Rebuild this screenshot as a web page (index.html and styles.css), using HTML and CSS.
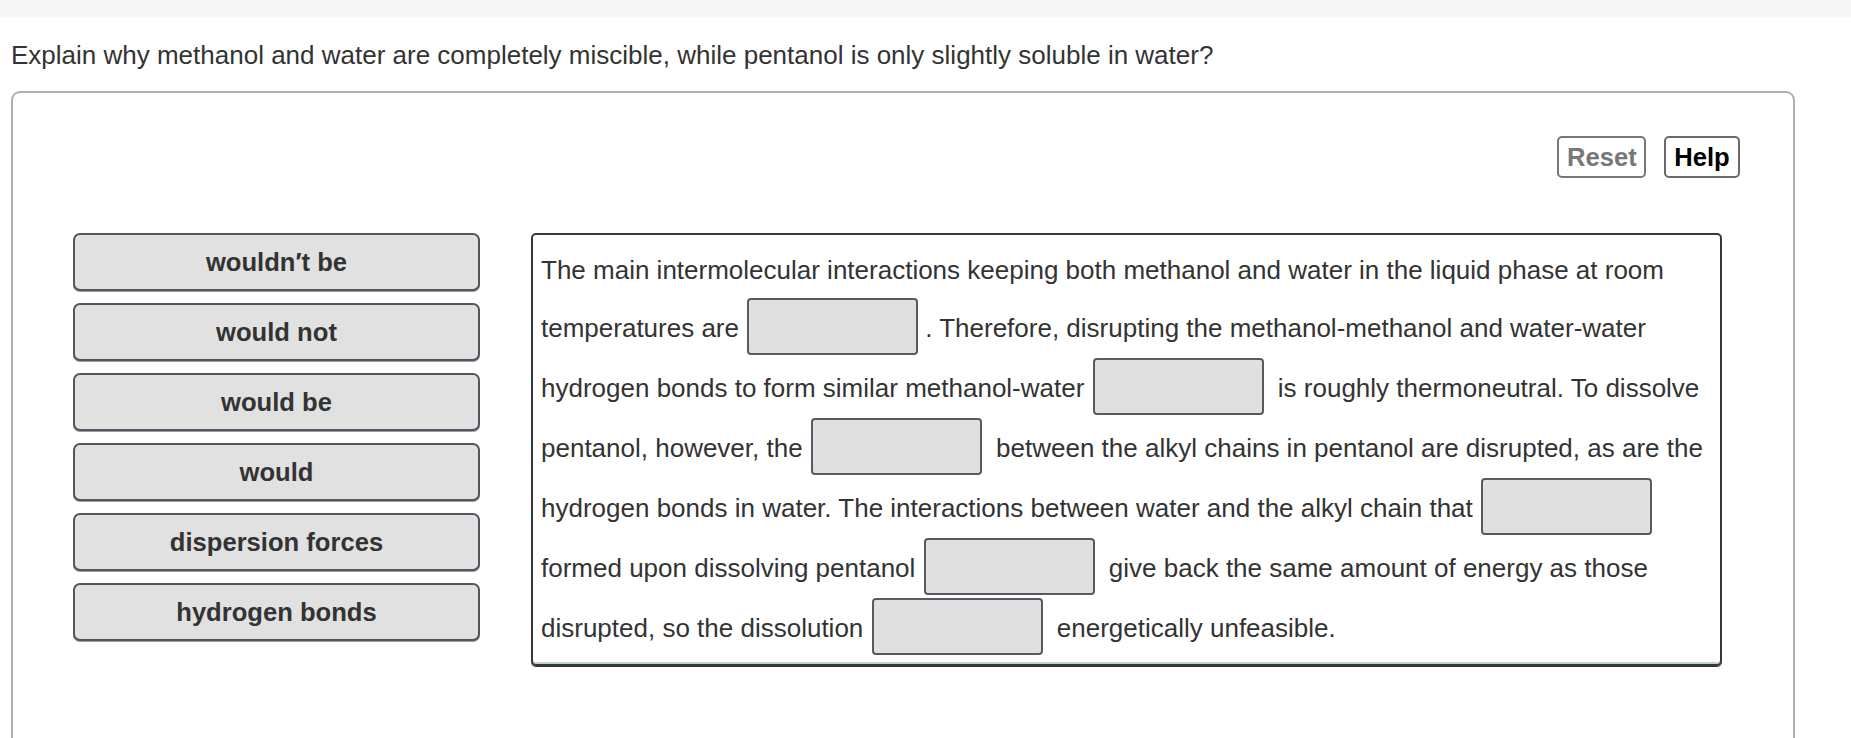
FILE: index.html
```html
<!DOCTYPE html>
<html lang="en">
<head>
<meta charset="utf-8">
<title>Miscibility question</title>
<link rel="stylesheet" href="styles.css">
</head>
<body>
<div class="topbar"></div>
<p class="question">Explain why methanol and water are completely miscible, while pentanol is only slightly soluble in water?</p>
<div class="panel">
  <div class="toolbar">
    <button class="tool-btn reset">Reset</button>
    <button class="tool-btn help">Help</button>
  </div>
  <div class="work">
    <div class="bank">
      <div class="chip">wouldn′t be</div>
      <div class="chip">would not</div>
      <div class="chip">would be</div>
      <div class="chip">would</div>
      <div class="chip">dispersion forces</div>
      <div class="chip">hydrogen bonds</div>
    </div>
    <div class="passage">The main intermolecular interactions keeping both methanol and water in the liquid phase at room temperatures are <span class="drop"></span>. Therefore, disrupting the methanol-methanol and water-water hydrogen bonds to form similar methanol-water <span class="drop"></span> is roughly thermoneutral. To dissolve pentanol, however, the <span class="drop"></span> between the alkyl chains in pentanol are disrupted, as are the hydrogen bonds in water. The interactions between water and the alkyl chain that <span class="drop"></span> formed upon dissolving pentanol <span class="drop"></span> give back the same amount of energy as those disrupted, so the dissolution <span class="drop"></span> energetically unfeasible.</div>
  </div>
</div>
</body>
</html>
```
FILE: styles.css
```css
html, body {
  margin: 0;
  padding: 0;
  background: #ffffff;
  font-family: "Liberation Sans", Arial, Helvetica, sans-serif;
  color: #333333;
  overflow: hidden;
}

.topbar {
  height: 17px;
  background: #f7f7f7;
}

.question {
  margin: 23px 0 21px 11px;
  font-size: 26px;
  line-height: 30px;
  color: #333333;
}

.panel {
  margin-left: 11px;
  width: 1784px;
  height: 700px;
  border: 2px solid #b0b0b0;
  border-radius: 9px;
  padding: 43px 53px 0 0;
  box-sizing: border-box;
}

.toolbar {
  display: flex;
  justify-content: flex-end;
  gap: 18px;
}

.tool-btn {
  font-family: "Liberation Sans", Arial, Helvetica, sans-serif;
  font-size: 25.6px;
  font-weight: bold;
  height: 42px;
  padding: 0 8px;
  background: #ffffff;
  border: 2px solid #777777;
  border-radius: 5px;
  line-height: 36px;
}

.reset {
  color: #777777;
  width: 89px;
}

.help {
  color: #000000;
  border-color: #6a6a6a;
  width: 76px;
}

.work {
  display: flex;
  align-items: flex-start;
  gap: 51px;
  margin-top: 55px;
  padding-left: 60px;
}

.bank {
  display: flex;
  flex-direction: column;
  gap: 12px;
  width: 407px;
  flex: none;
}

.chip {
  height: 58px;
  box-sizing: border-box;
  display: flex;
  align-items: center;
  justify-content: center;
  background: #e1e1e1;
  border: 2px solid #55555f;
  border-radius: 7px;
  box-shadow: 0 1px 0 #9a9aa2;
  font-size: 25.6px;
  font-weight: bold;
  color: #333333;
}

.passage {
  width: 1191px;
  box-sizing: border-box;
  flex: none;
  border: 2px solid #35393c;
  border-radius: 5px;
  box-shadow: 0 1px 0 #2b3134, inset 0 -2px 0 #c3ced2;
  padding: 9px 4px 8px 8px;
  font-size: 26px;
  line-height: 52px;
  color: #333333;
}

.drop {
  display: inline-block;
  width: 171px;
  height: 57px;
  box-sizing: border-box;
  margin: 1.5px 7px 1.5px 1px;
  vertical-align: -19.5px;
  background: #e0e0e0;
  border: 2px solid #575b61;
  border-radius: 4px;
}
```
